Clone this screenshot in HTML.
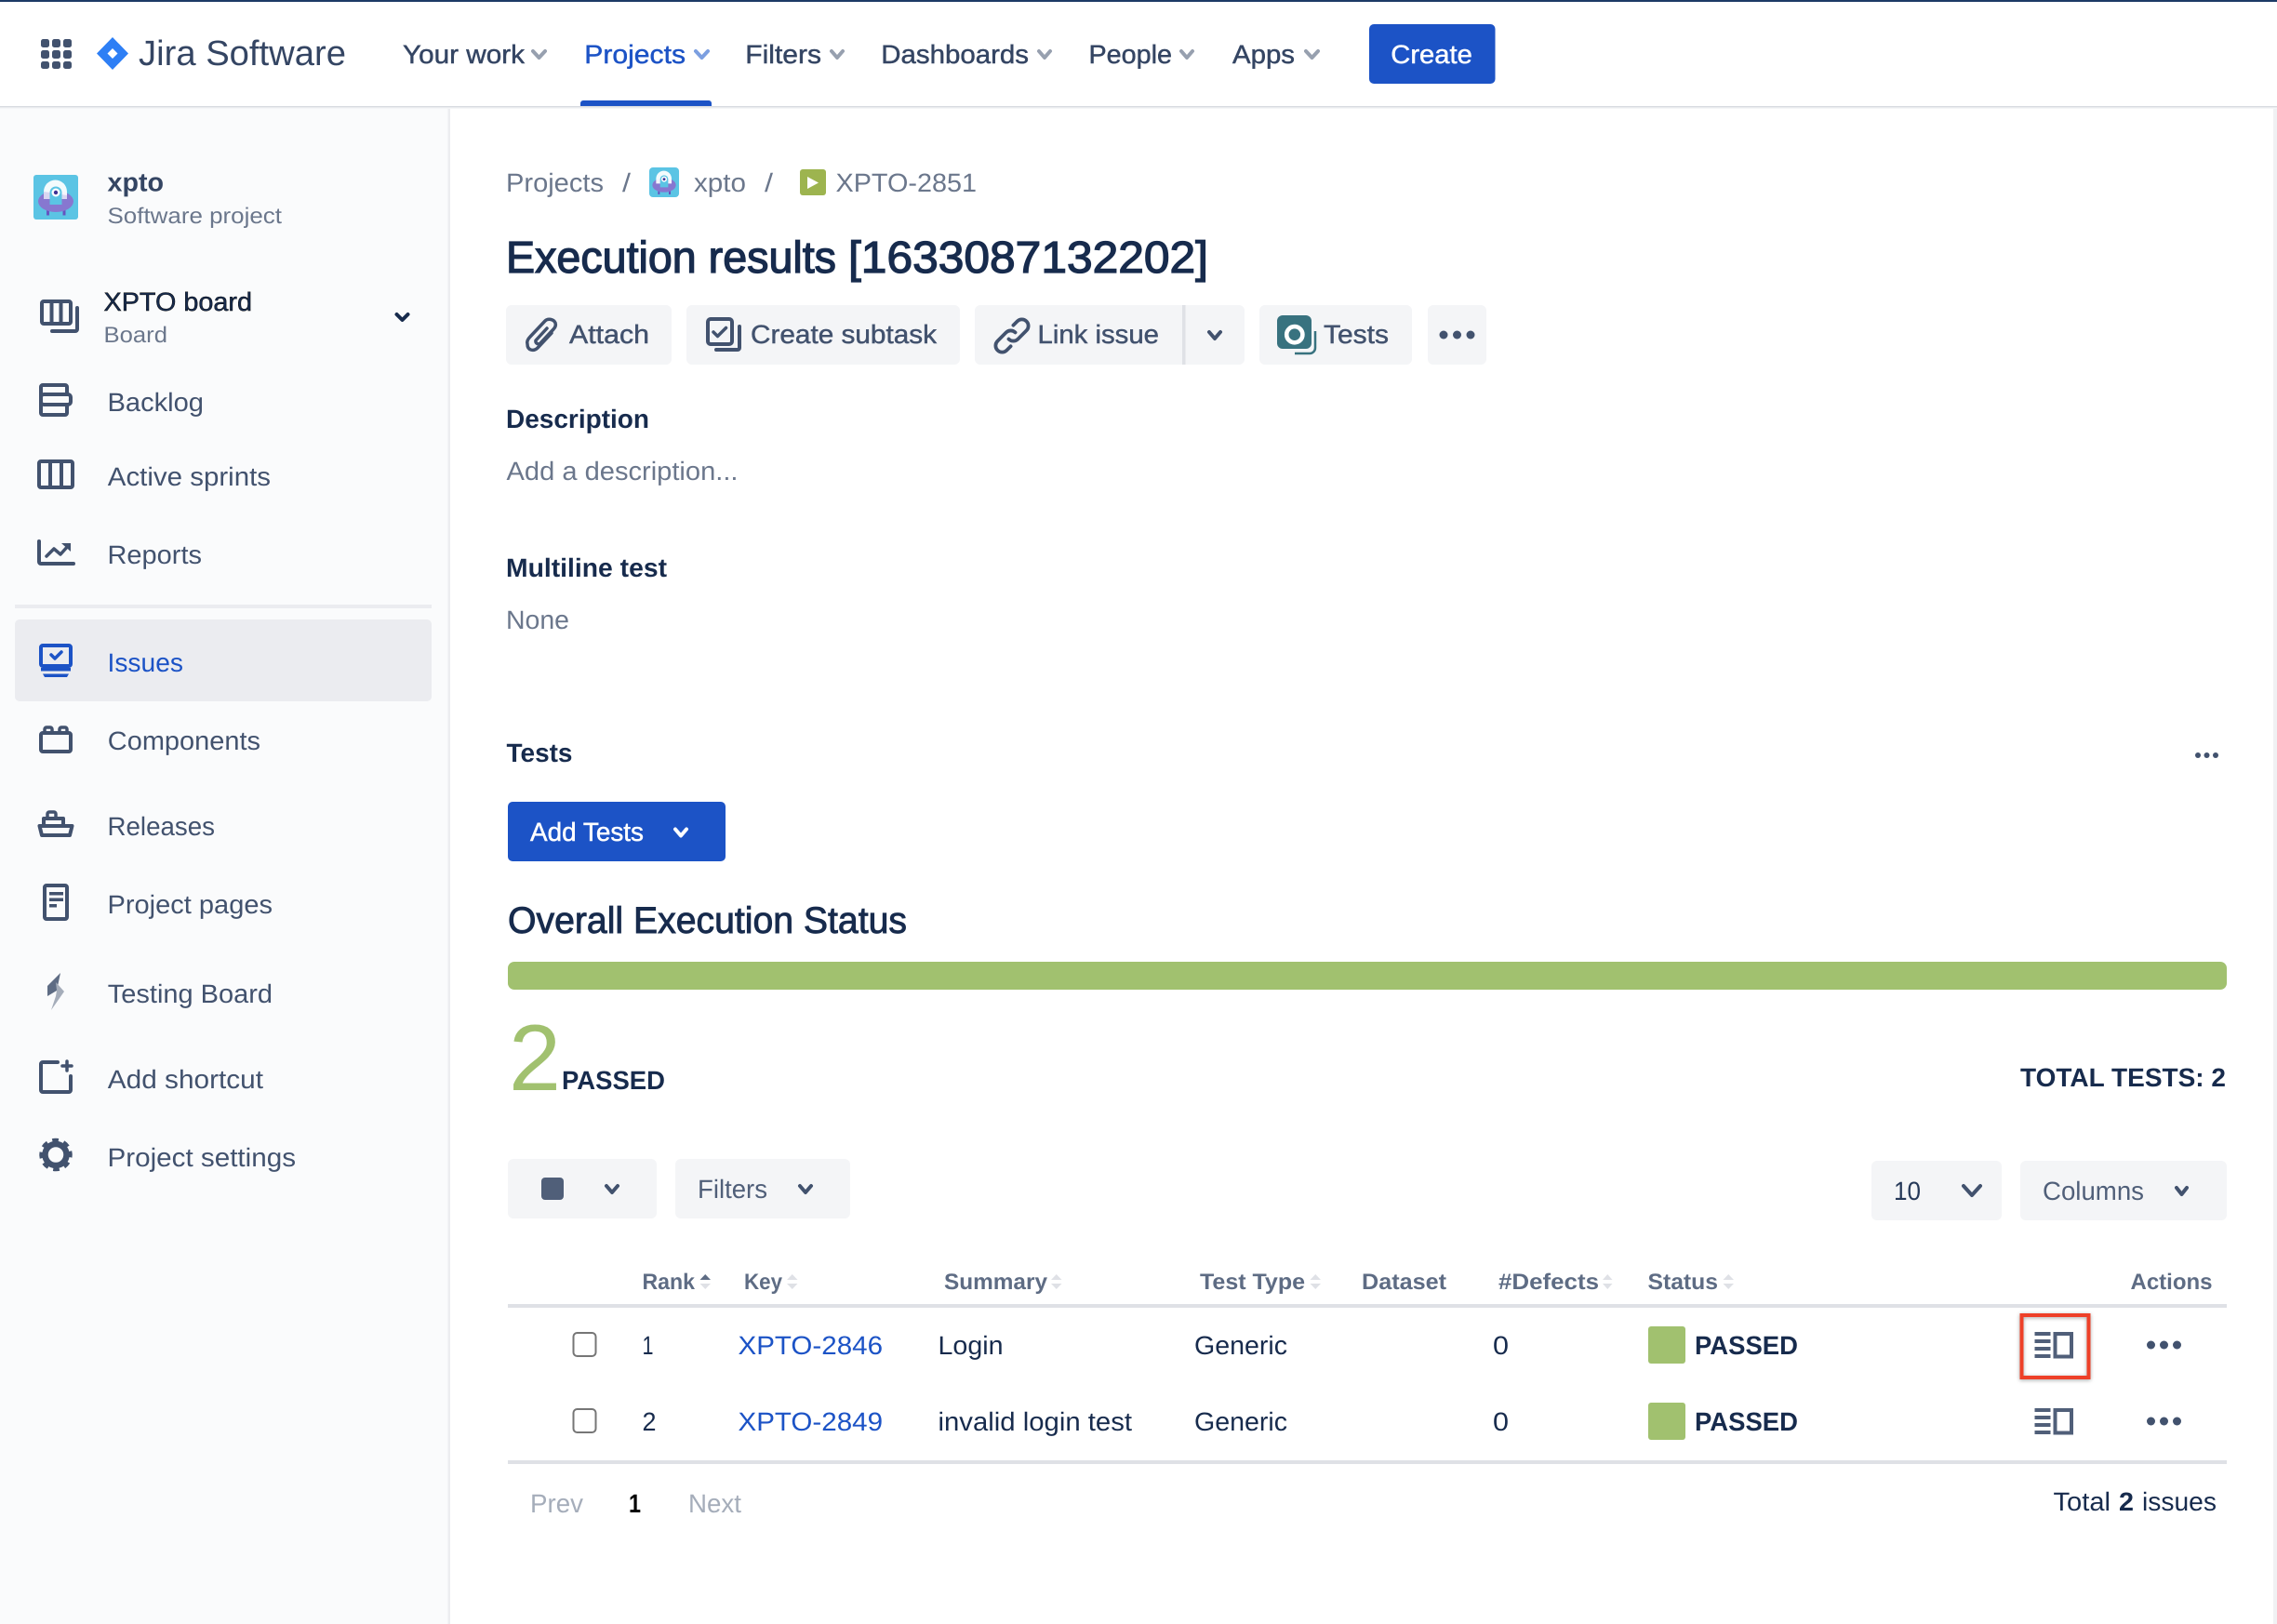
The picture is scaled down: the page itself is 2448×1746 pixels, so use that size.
<!DOCTYPE html>
<html lang="en"><head><meta charset="utf-8"><title>Execution results</title>
<style>
html,body{margin:0;padding:0;background:#fff;width:2448px;height:1746px;overflow:hidden}
svg{display:block}
text{font-family:"Liberation Sans",Arial,sans-serif;font-size:28px;fill:#42526E;text-rendering:geometricPrecision}
.m{stroke:currentColor;stroke-width:.45px}
.b{font-weight:700}
.g{fill:#6B778C}
.d{fill:#172B4D}
.n{fill:#344563;color:#344563}
.bl{fill:#1C53C6;color:#1C53C6}
.w{fill:#fff;color:#fff}
.s{font-size:24px}
.h{font-size:24px;font-weight:700;fill:#5E6C84}
.i{fill:none;stroke:#42526E;stroke-width:4;stroke-linejoin:round;stroke-linecap:round}
.c{fill:none;stroke:#97A0AF;stroke-width:4;stroke-linecap:round;stroke-linejoin:round}
.cd{fill:none;stroke:#42526E;stroke-width:4;stroke-linecap:round;stroke-linejoin:round}
.so{fill:#DFE1E6}
.btn{fill:#F4F5F7}
</style></head><body>
<svg xmlns="http://www.w3.org/2000/svg" width="2448" height="1746" viewBox="0 0 2448 1746">
<rect width="2448" height="1746" fill="#fff"/>
<!-- sidebar -->
<rect x="0" y="114" width="482" height="1632" fill="#FAFBFC"/>
<rect x="481.500" y="114" width="2.500" height="1632" fill="#ECEDF0"/>
<rect x="2444" y="114" width="4" height="1632" fill="#F0F1F3"/>
<!-- topbar -->
<rect width="2448" height="114" fill="#fff"/>
<rect width="2448" height="2" fill="#1D3A66"/>
<rect y="114" width="2448" height="1" fill="#D8DBE1"/><rect y="115" width="2448" height="1" fill="#E8EAED"/><rect y="116" width="2448" height="1" fill="#F4F5F7"/>
<g fill="#42526E">
<rect x="44" y="42" width="9" height="9" rx="2.500"/><rect x="56" y="42" width="9" height="9" rx="2.500"/><rect x="68" y="42" width="9" height="9" rx="2.500"/>
<rect x="44" y="54" width="9" height="9" rx="2.500"/><rect x="56" y="54" width="9" height="9" rx="2.500"/><rect x="68" y="54" width="9" height="9" rx="2.500"/>
<rect x="44" y="66" width="9" height="8" rx="2.500"/><rect x="56" y="66" width="9" height="8" rx="2.500"/><rect x="68" y="66" width="9" height="8" rx="2.500"/>
</g>
<path d="M121 40L138 57.500L121 75L104 57.500ZM121 52L115.500 57.500L121 63L126.500 57.500Z" fill="#2E7FF5" fill-rule="evenodd"/>
<text x="149" y="70" style="font-size:38px;fill:#344563" textLength="223" lengthAdjust="spacingAndGlyphs">Jira Software</text>
<text class="n m" x="433" y="68" textLength="131" lengthAdjust="spacingAndGlyphs">Your work</text>
<path class="c" d="M573 55l6.500 7 6.500-7"/>
<text class="bl m" x="628.300" y="68" textLength="108.700" lengthAdjust="spacingAndGlyphs">Projects</text>
<path class="c" style="stroke:#7C9FE0" d="M748 55l6.500 7 6.500-7"/>
<path d="M624 114v-3a3 3 0 0 1 3-3h135a3 3 0 0 1 3 3v3z" fill="#1C53C6"/>
<text class="n m" x="801.300" y="68" textLength="81.700" lengthAdjust="spacingAndGlyphs">Filters</text>
<path class="c" d="M894 55l6 7 6-7"/>
<text class="n m" x="947.300" y="68" textLength="158.700" lengthAdjust="spacingAndGlyphs">Dashboards</text>
<path class="c" d="M1117 55l6 7 6-7"/>
<text class="n m" x="1170.500" y="68" textLength="89.500" lengthAdjust="spacingAndGlyphs">People</text>
<path class="c" d="M1270 55l6 7 6-7"/>
<text class="n m" x="1325" y="68" textLength="67" lengthAdjust="spacingAndGlyphs">Apps</text>
<path class="c" d="M1404 55l6.500 7 6.500-7"/>
<rect x="1472" y="26" width="135.500" height="64" rx="5" fill="#1C53C6"/>
<text class="w m" x="1495.300" y="68" textLength="87.500" lengthAdjust="spacingAndGlyphs">Create</text>

<!-- sidebar content -->
<g>
<rect x="36" y="188" width="48" height="48" rx="3" fill="#5BC4E4"/>
<rect x="50" y="225" width="3" height="6.500" fill="#6554C0"/><rect x="67.500" y="225" width="3" height="6.500" fill="#6554C0"/>
<ellipse cx="60" cy="216.500" rx="19" ry="11.500" fill="#8777D0"/>
<path d="M47 214v-8a12.500 12.500 0 0 1 25 0v8z" fill="#fff" opacity=".92"/>
<path d="M47 206v8h25v-4z" fill="#C7C1EA" opacity=".6"/>
<path d="M53.500 220v-13a6.500 6.500 0 0 1 13 0v13z" fill="#5BC4E4"/>
<circle cx="60" cy="207" r="4.500" fill="#fff"/><circle cx="60" cy="207" r="2.200" fill="#403294"/>
</g>
<text class="n b" x="115.500" y="205.500" textLength="60.500" lengthAdjust="spacingAndGlyphs">xpto</text>
<text class="g s" x="115.500" y="240" textLength="187.500" lengthAdjust="spacingAndGlyphs">Software project</text>
<rect class="i" x="45" y="324" width="31" height="24" rx="2"/>
<path class="i" d="M55.500 325v22M65.500 325v22"/>
<path class="i" d="M83 331v23a2 2 0 0 1-2 2H56"/>
<text class="d m" x="111.500" y="334" textLength="159.500" lengthAdjust="spacingAndGlyphs">XPTO board</text>
<text class="g s" x="111.500" y="368" textLength="68.500" lengthAdjust="spacingAndGlyphs">Board</text>
<path class="cd" style="stroke:#172B4D" d="M426.500 338l6 6 6-6"/>

<rect class="i" x="44" y="414" width="28" height="32" rx="2"/>
<rect x="44" y="424" width="32" height="11" rx="3" fill="#FAFBFC" stroke="#42526E" stroke-width="4"/>
<text x="115.500" y="442" textLength="103.500" lengthAdjust="spacingAndGlyphs">Backlog</text>
<rect class="i" x="42" y="496" width="36" height="28" rx="2"/>
<path class="i" d="M54 497v26M66 497v26"/>
<text x="115.800" y="522" textLength="175.200" lengthAdjust="spacingAndGlyphs">Active sprints</text>
<path class="i" d="M42 582v22a2 2 0 0 0 2 2h35"/>
<path class="i" style="stroke-width:3.500" d="M50 598l8-8 7 6 9-10"/><path d="M66 584h10v9z" fill="#42526E"/>
<text x="115.500" y="606" textLength="101.500" lengthAdjust="spacingAndGlyphs">Reports</text>
<rect x="16" y="650" width="448" height="4" fill="#EBECF0"/>
<rect x="16" y="666" width="448" height="88" rx="5" fill="#EBECF0"/>
<rect class="i" style="stroke:#1C53C6" x="44" y="694" width="32" height="22" rx="2"/>
<path class="i" style="stroke:#1C53C6;stroke-width:3.500" d="M55 704l4 4 7-7"/>
<rect x="44" y="718" width="32" height="3.500" fill="#1C53C6"/><path d="M46 724.500h28l-2 3.500H48z" fill="#1C53C6"/>
<text class="bl" x="115.500" y="722" textLength="81.500" lengthAdjust="spacingAndGlyphs">Issues</text>
<rect class="i" x="44" y="788" width="32" height="20" rx="2"/>
<rect class="i" style="stroke-width:3.500" x="48" y="782" width="8" height="6" rx="2"/><rect class="i" style="stroke-width:3.500" x="64" y="782" width="8" height="6" rx="2"/>
<text x="115.800" y="806" textLength="164.200" lengthAdjust="spacingAndGlyphs">Components</text>
<path class="i" d="M42.500 888h35l-2.500 10H45z"/>
<path class="i" d="M47 887v-7h21v7"/><path class="i" style="stroke-width:3.500" d="M51 879v-4a2 2 0 0 1 2-2h5a2 2 0 0 1 2 2v4"/>
<text x="115.500" y="898" textLength="115.500" lengthAdjust="spacingAndGlyphs">Releases</text>
<rect class="i" x="48" y="952" width="24" height="36" rx="2"/>
<rect x="53" y="959" width="15" height="3.500" fill="#42526E"/><rect x="53" y="965.500" width="15" height="3.500" fill="#42526E"/><rect x="53" y="972" width="8" height="3.500" fill="#42526E"/>
<text x="115.500" y="982" textLength="177.500" lengthAdjust="spacingAndGlyphs">Project pages</text>
<path d="M65 1046L51 1060L51 1071L61 1065Z" fill="#5E6C84"/>
<path d="M60 1056L69 1066L55 1086L60 1071L61 1065Z" fill="#A5ADBA"/>
<text x="115.800" y="1078" textLength="177.200" lengthAdjust="spacingAndGlyphs">Testing Board</text>
<path class="i" d="M62 1142H46a2 2 0 0 0-2 2v28a2 2 0 0 0 2 2h28a2 2 0 0 0 2-2v-15"/>
<path class="i" style="stroke-width:3.500" d="M72 1141v10M67 1146h10"/>
<text x="115.800" y="1170" textLength="167.200" lengthAdjust="spacingAndGlyphs">Add shortcut</text>
<circle cx="60" cy="1241.500" r="11.500" fill="none" stroke="#42526E" stroke-width="6.500"/>
<circle cx="60" cy="1241.500" r="15.500" fill="none" stroke="#42526E" stroke-width="4.500" stroke-dasharray="6.500 5.670" transform="rotate(-14 60 1241.500)"/>
<text x="115.500" y="1254" textLength="202.500" lengthAdjust="spacingAndGlyphs">Project settings</text>

<!-- breadcrumbs -->
<text class="g" x="544" y="206" textLength="105" lengthAdjust="spacingAndGlyphs">Projects</text>
<text class="g" x="669" y="206" textLength="9" lengthAdjust="spacingAndGlyphs">/</text>
<g transform="translate(674 54.600) scale(.667)">
<rect x="36" y="188" width="48" height="48" rx="6" fill="#5BC4E4"/>
<rect x="50" y="225" width="3" height="6.500" fill="#6554C0"/><rect x="67.500" y="225" width="3" height="6.500" fill="#6554C0"/>
<ellipse cx="60" cy="216.500" rx="19" ry="11.500" fill="#8777D0"/>
<path d="M47 214v-8a12.500 12.500 0 0 1 25 0v8z" fill="#fff" opacity=".92"/>
<path d="M53.500 220v-13a6.500 6.500 0 0 1 13 0v13z" fill="#5BC4E4"/>
<circle cx="60" cy="207" r="4.500" fill="#fff"/><circle cx="60" cy="207" r="2.200" fill="#403294"/>
</g>
<text class="g" x="746" y="206" textLength="56" lengthAdjust="spacingAndGlyphs">xpto</text>
<text class="g" x="822" y="206" textLength="9" lengthAdjust="spacingAndGlyphs">/</text>
<rect x="860" y="182" width="28" height="28" rx="3" fill="#9DB44F"/>
<path d="M868 190l12 6.500-12 6.500z" fill="#fff"/>
<text class="g" x="898.500" y="206" textLength="151.500" lengthAdjust="spacingAndGlyphs">XPTO-2851</text>
<text class="d" style="font-size:48px;color:#172B4D;stroke:currentColor;stroke-width:1.300px" x="544" y="293" textLength="355" lengthAdjust="spacingAndGlyphs">Execution results</text>
<text class="d" style="font-size:48px;color:#172B4D;stroke:currentColor;stroke-width:1.300px" x="912" y="293" textLength="387" lengthAdjust="spacingAndGlyphs">[1633087132202]</text>

<!-- action buttons -->
<rect class="btn" x="544" y="328" width="178" height="64" rx="6"/>
<path class="i" style="stroke-width:3.500" d="M593 358L578 374C574 378 567 377 567 370C566 367 568 364 570 362L586 345C589 342 595 343 597 347C598 350 597 352 595 354L581 369C579 371 575 369 576 366L588 353"/>
<text class="m" style="color:#42526E" x="612" y="369" textLength="86" lengthAdjust="spacingAndGlyphs">Attach</text>
<rect class="btn" x="738" y="328" width="294" height="64" rx="6"/>
<rect class="i" x="761" y="343" width="26" height="27" rx="3"/>
<path class="i" style="stroke-width:3.500" d="M767 357l4.500 4.500 9-9"/>
<path class="i" d="M795 351v23a2 2 0 0 1-2 2H770"/>
<text class="m" style="color:#42526E" x="807" y="369" textLength="200" lengthAdjust="spacingAndGlyphs">Create subtask</text>
<rect class="btn" x="1048" y="328" width="290" height="64" rx="6"/>
<rect x="1271" y="328" width="3.500" height="64" fill="#DFE1E6"/>
<g transform="rotate(-45 1088 361)" fill="none" stroke="#42526E" stroke-width="3.800" stroke-linecap="round">
<path d="M1093 361a7 7 0 0 0-7-7H1073a7 7 0 0 0 0 14H1079"/>
<path d="M1083 361a7 7 0 0 0 7 7H1103a7 7 0 0 0 0-14H1097"/>
</g>
<text class="m" style="color:#42526E" x="1115.500" y="369" textLength="130.500" lengthAdjust="spacingAndGlyphs">Link issue</text>
<path class="cd" d="M1300 357l6 7 6-7"/>
<rect class="btn" x="1354" y="328" width="164" height="64" rx="6"/>
<path d="M1414 356v18a6 6 0 0 1-6 6h-16" fill="none" stroke="#38727F" stroke-width="2.500"/>
<rect x="1373" y="339" width="37" height="36" rx="6" fill="#38727F"/>
<circle cx="1391.800" cy="359.700" r="8.600" fill="none" stroke="#fff" stroke-width="4.600"/>
<text class="m" style="color:#42526E" x="1423" y="369" textLength="70" lengthAdjust="spacingAndGlyphs">Tests</text>
<rect class="btn" x="1535" y="328" width="63" height="64" rx="6"/>
<g fill="#42526E"><circle cx="1552" cy="360" r="4.500"/><circle cx="1566.500" cy="360" r="4.500"/><circle cx="1581" cy="360" r="4.500"/></g>

<text class="d b" x="544" y="460" textLength="154" lengthAdjust="spacingAndGlyphs">Description</text>
<text class="g" x="544.500" y="516" textLength="249" lengthAdjust="spacingAndGlyphs">Add a description...</text>
<text class="d b" x="544" y="620" textLength="173" lengthAdjust="spacingAndGlyphs">Multiline test</text>
<text class="g" x="544" y="676" textLength="68" lengthAdjust="spacingAndGlyphs">None</text>
<text class="d b" x="544.500" y="819" textLength="71" lengthAdjust="spacingAndGlyphs">Tests</text>
<g fill="#42526E"><circle cx="2363" cy="812" r="3"/><circle cx="2372.500" cy="812" r="3"/><circle cx="2382" cy="812" r="3"/></g>
<rect x="546" y="862" width="234" height="64" rx="5" fill="#1C53C6"/>
<text class="w m" x="570" y="904" textLength="122" lengthAdjust="spacingAndGlyphs">Add Tests</text>
<path class="c" style="stroke:#fff" d="M726 891.500l6 7 6-7"/>
<text class="d" style="font-size:40px;color:#172B4D;stroke:currentColor;stroke-width:.9px" x="546" y="1003" textLength="429" lengthAdjust="spacingAndGlyphs">Overall Execution Status</text>
<rect x="546" y="1034" width="1848" height="30" rx="7" fill="#A1C16F"/>
<text style="font-size:101px;fill:#A1C16F" x="547" y="1172" textLength="56" lengthAdjust="spacingAndGlyphs">2</text>
<text class="d b" x="604" y="1171" textLength="111" lengthAdjust="spacingAndGlyphs">PASSED</text>
<text class="d b" x="2172" y="1168" textLength="221" lengthAdjust="spacingAndGlyphs">TOTAL TESTS: 2</text>

<!-- toolbar -->
<rect class="btn" x="546" y="1246" width="160" height="64" rx="6"/>
<rect x="582" y="1266" width="24" height="24" rx="4" fill="#505F79"/>
<path class="cd" d="M652 1275l6 7 6-7"/>
<rect class="btn" x="726" y="1246" width="188" height="64" rx="6"/>
<text style="fill:#505F79" x="750" y="1288" textLength="75" lengthAdjust="spacingAndGlyphs">Filters</text>
<path class="cd" d="M860 1275l6 7 6-7"/>
<rect class="btn" x="2012" y="1248" width="140" height="64" rx="6"/>
<text style="fill:#253858" x="2036" y="1290" textLength="29" lengthAdjust="spacingAndGlyphs">10</text>
<path class="cd" d="M2111 1275l9 10 9-10"/>
<rect class="btn" x="2172" y="1248" width="222" height="64" rx="6"/>
<text style="fill:#505F79" x="2196" y="1290" textLength="109" lengthAdjust="spacingAndGlyphs">Columns</text>
<path class="cd" d="M2340 1277l5.500 7 5.500-7"/>

<!-- table header -->
<text class="h" x="690.500" y="1386" textLength="56.500" lengthAdjust="spacingAndGlyphs">Rank</text>
<path d="M752.500 1376l5.750-6 5.750 6z" fill="#5E6C84"/><path class="so" d="M752.500 1380l5.750 6 5.750-6z"/>
<text class="h" x="800" y="1386" textLength="41" lengthAdjust="spacingAndGlyphs">Key</text>
<path class="so" d="M846 1376l5.750-6 5.750 6zM846 1380l5.750 6 5.750-6z"/>
<text class="h" x="1015" y="1386" textLength="111" lengthAdjust="spacingAndGlyphs">Summary</text>
<path class="so" d="M1130 1376l5.750-6 5.750 6zM1130 1380l5.750 6 5.750-6z"/>
<text class="h" x="1290" y="1386" textLength="113" lengthAdjust="spacingAndGlyphs">Test Type</text>
<path class="so" d="M1408.500 1376l5.750-6 5.750 6zM1408.500 1380l5.750 6 5.750-6z"/>
<text class="h" x="1464" y="1386" textLength="91" lengthAdjust="spacingAndGlyphs">Dataset</text>
<text class="h" x="1611" y="1386" textLength="108" lengthAdjust="spacingAndGlyphs">#Defects</text>
<path class="so" d="M1723 1376l5.250-6 5.250 6zM1723 1380l5.250 6 5.250-6z"/>
<text class="h" x="1771.500" y="1386" textLength="75.500" lengthAdjust="spacingAndGlyphs">Status</text>
<path class="so" d="M1852.500 1376l5.750-6 5.750 6zM1852.500 1380l5.750 6 5.750-6z"/>
<text class="h" x="2290.500" y="1386" textLength="88" lengthAdjust="spacingAndGlyphs">Actions</text>
<rect x="546" y="1402" width="1848" height="4" fill="#DFE1E6"/>

<!-- rows -->
<rect x="616.500" y="1433" width="24" height="25" rx="4" fill="#fff" stroke="#767676" stroke-width="2"/>
<text class="d" x="690.500" y="1456" textLength="12" lengthAdjust="spacingAndGlyphs">1</text>
<text class="bl" x="793.500" y="1456" textLength="155.500" lengthAdjust="spacingAndGlyphs">XPTO-2846</text>
<text class="d" x="1008.500" y="1456" textLength="70" lengthAdjust="spacingAndGlyphs">Login</text>
<text class="d" x="1284" y="1456" textLength="100" lengthAdjust="spacingAndGlyphs">Generic</text>
<text class="d" x="1605" y="1456" textLength="17" lengthAdjust="spacingAndGlyphs">0</text>
<rect x="1772" y="1426" width="40" height="40" rx="3" fill="#A1C16F"/>
<text class="d b" x="1822" y="1456" textLength="111" lengthAdjust="spacingAndGlyphs">PASSED</text>
<rect x="2173.500" y="1414" width="72" height="67" fill="none" stroke="#EE4028" stroke-width="4" style="filter:drop-shadow(0 1px 2px rgba(0,0,0,.35))"/>
<g fill="#505F79"><rect x="2187.500" y="1432" width="17" height="4"/><rect x="2187.500" y="1440" width="17" height="4"/><rect x="2187.500" y="1448" width="17" height="4"/><rect x="2187.500" y="1456" width="17" height="4"/></g>
<rect x="2209.500" y="1434" width="17.500" height="24.500" fill="none" stroke="#505F79" stroke-width="4"/>
<g fill="#42526E"><circle cx="2312.500" cy="1446" r="4.500"/><circle cx="2326.500" cy="1446" r="4.500"/><circle cx="2340.500" cy="1446" r="4.500"/></g>

<rect x="616.500" y="1515" width="24" height="25" rx="4" fill="#fff" stroke="#767676" stroke-width="2"/>
<text class="d" x="690.500" y="1538" textLength="15" lengthAdjust="spacingAndGlyphs">2</text>
<text class="bl" x="793.500" y="1538" textLength="155.500" lengthAdjust="spacingAndGlyphs">XPTO-2849</text>
<text class="d" x="1008.500" y="1538" textLength="208.500" lengthAdjust="spacingAndGlyphs">invalid login test</text>
<text class="d" x="1284" y="1538" textLength="100" lengthAdjust="spacingAndGlyphs">Generic</text>
<text class="d" x="1605" y="1538" textLength="17" lengthAdjust="spacingAndGlyphs">0</text>
<rect x="1772" y="1508" width="40" height="40" rx="3" fill="#A1C16F"/>
<text class="d b" x="1822" y="1538" textLength="111" lengthAdjust="spacingAndGlyphs">PASSED</text>
<g fill="#505F79"><rect x="2187.500" y="1514" width="17" height="4"/><rect x="2187.500" y="1522" width="17" height="4"/><rect x="2187.500" y="1530" width="17" height="4"/><rect x="2187.500" y="1538" width="17" height="4"/></g>
<rect x="2209.500" y="1516" width="17.500" height="24.500" fill="none" stroke="#505F79" stroke-width="4"/>
<g fill="#42526E"><circle cx="2312.500" cy="1528" r="4.500"/><circle cx="2326.500" cy="1528" r="4.500"/><circle cx="2340.500" cy="1528" r="4.500"/></g>
<rect x="546" y="1570" width="1848" height="4" fill="#DFE1E6"/>

<!-- pagination -->
<text style="fill:#A5ADBA" x="570" y="1626" textLength="57" lengthAdjust="spacingAndGlyphs">Prev</text>
<text class="b" style="fill:#000" x="676" y="1626" textLength="13" lengthAdjust="spacingAndGlyphs">1</text>
<text style="fill:#A5ADBA" x="740" y="1626" textLength="57" lengthAdjust="spacingAndGlyphs">Next</text>
<text class="d" x="2207.500" y="1624" textLength="61.500" lengthAdjust="spacingAndGlyphs">Total</text>
<text class="d b" x="2278" y="1624" textLength="16" lengthAdjust="spacingAndGlyphs">2</text>
<text class="d" x="2303" y="1624" textLength="80" lengthAdjust="spacingAndGlyphs">issues</text>
</svg>
</body></html>
